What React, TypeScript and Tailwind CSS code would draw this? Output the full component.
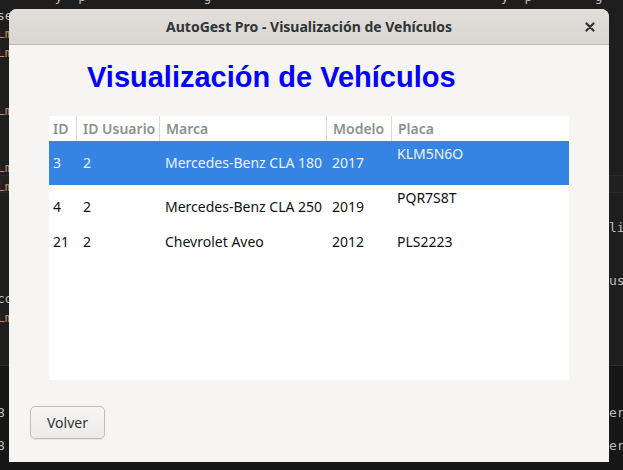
import React from "react";

type Vehiculo = { id: string; usuario: string; marca: string; modelo: string; placa: string; dosLineas?: boolean };

const ROWS: Vehiculo[] = [
  { id: "3", usuario: "2", marca: "Mercedes-Benz CLA 180", modelo: "2017", placa: "KLM5N6O", dosLineas: true },
  { id: "4", usuario: "2", marca: "Mercedes-Benz CLA 250", modelo: "2019", placa: "PQR7S8T", dosLineas: true },
  { id: "21", usuario: "2", marca: "Chevrolet Aveo", modelo: "2012", placa: "PLS2223" },
];

const COLS = "grid grid-cols-[28px_83px_167px_65px_177px]";

// fragmentos del terminal que queda detrás de la ventana
const LEFT_LINES: { top: number; text: string; orange?: boolean }[] = [
  { top: 8, text: "se" },
  { top: 26, text: "Lm", orange: true },
  { top: 45, text: "Lm", orange: true },
  { top: 103, text: "Lm", orange: true },
  { top: 160, text: "Lm", orange: true },
  { top: 179, text: "Lm", orange: true },
  { top: 291, text: "co" },
  { top: 310, text: "Lm", orange: true },
  { top: 405, text: "8" },
  { top: 438, text: "8" },
];

const RIGHT_LINES: { top: number; text: string }[] = [
  { top: 220, text: "li" },
  { top: 273, text: "us" },
  { top: 405, text: "er" },
  { top: 438, text: "er" },
];

function Terminal() {
  return (
    <div className="absolute inset-0 font-['DejaVu_Sans_Mono',monospace] text-[13px] leading-[16px] text-[#bdbdbd]">
      <div className="flex h-[175px] flex-col bg-[#1e1e1e]" />
      <div className="h-[18px] border-y border-[#2a2a2a] bg-[#202020]" />
      <div className="h-[172px] bg-[#1e1e1e]" />
      <div className="h-[105px] border-t border-[#2c2c2c] bg-[#171717]" />
      <div className="absolute left-0 top-[-11px] w-full whitespace-pre">{"       y  p               g                                     y  p        g"}</div>
      {LEFT_LINES.map((l, i) => (
        <div key={i} className={`absolute left-[-3px] ${l.orange ? "text-[#d08a62]" : ""}`} style={{ top: l.top }}>
          {l.text}
        </div>
      ))}
      {RIGHT_LINES.map((l, i) => (
        <div key={i} className="absolute left-[609px]" style={{ top: l.top }}>
          {l.text}
        </div>
      ))}
    </div>
  );
}

function Ventana() {
  return (
    <div className="absolute left-[9px] top-[9px] flex h-[453px] w-[600px] flex-col overflow-hidden rounded-t-[8px] bg-[#f6f5f4] font-['Noto_Sans',sans-serif]">
      <div className="relative flex h-[36px] shrink-0 items-center justify-center border-b border-[#bfb8b1] bg-gradient-to-b from-[#e1dedb] to-[#dad6d2]">
        <span className="text-[14px] font-bold text-[#2e3436]">AutoGest Pro - Visualización de Vehículos</span>
        <svg className="absolute right-[14px] top-[13px]" width="10" height="10" viewBox="0 0 10 10">
          <path d="M1.5 1.5 L8.5 8.5 M8.5 1.5 L1.5 8.5" stroke="#2e3436" strokeWidth="2.2" strokeLinecap="round" />
        </svg>
      </div>

      <h1 className="ml-[78px] mt-[15px] h-[56px] font-['Liberation_Sans',Arial,sans-serif] text-[29px] font-bold leading-[34px] text-[#0000ff]">
        Visualización de Vehículos
      </h1>

      <div className="mx-[40px] h-[264px] bg-white text-[14px] leading-[18px]">
        <div className={`${COLS} h-[25px] font-semibold text-[#8d9091]`}>
          {["ID", "ID Usuario", "Marca", "Modelo", "Placa"].map((h, i) => (
            <div key={h} className={`flex items-center ${i === 0 ? "pl-[4px]" : "pl-[6px]"} ${i < 4 ? "border-r border-[#dcd8d4]" : ""}`}>
              {h}
            </div>
          ))}
        </div>
        {ROWS.map((r, idx) => (
          <div key={r.id} className={`${COLS} ${idx === 0 ? "bg-[#3584e4] text-[#eef3fb]" : "text-[#111]"}`}>
            <div className="flex items-center py-[4px] pl-[4px]">{r.id}</div>
            <div className="flex items-center py-[4px] pl-[6px]">{r.usuario}</div>
            <div className="flex items-center py-[4px] pl-[5px]">{r.marca}</div>
            <div className="flex items-center py-[4px] pl-[5px]">{r.modelo}</div>
            <div className={`py-[4px] pl-[5px] ${r.dosLineas ? "h-[44px]" : ""}`}>{r.placa}</div>
          </div>
        ))}
      </div>

      <div className="mt-[26px] pl-[21px]">
        <button className="h-[33px] w-[75px] rounded-[5px] border border-[#c0bdba] bg-gradient-to-b from-[#f6f5f4] to-[#edebe9] text-[14px] text-[#2e3436] shadow-[0_1px_1px_rgba(0,0,0,0.07)]">
          Volver
        </button>
      </div>
    </div>
  );
}

export default function App() {
  return (
    <div className="relative h-[470px] w-[623px] overflow-hidden bg-[#1e1e1e]">
      <Terminal />
      <Ventana />
    </div>
  );
}
